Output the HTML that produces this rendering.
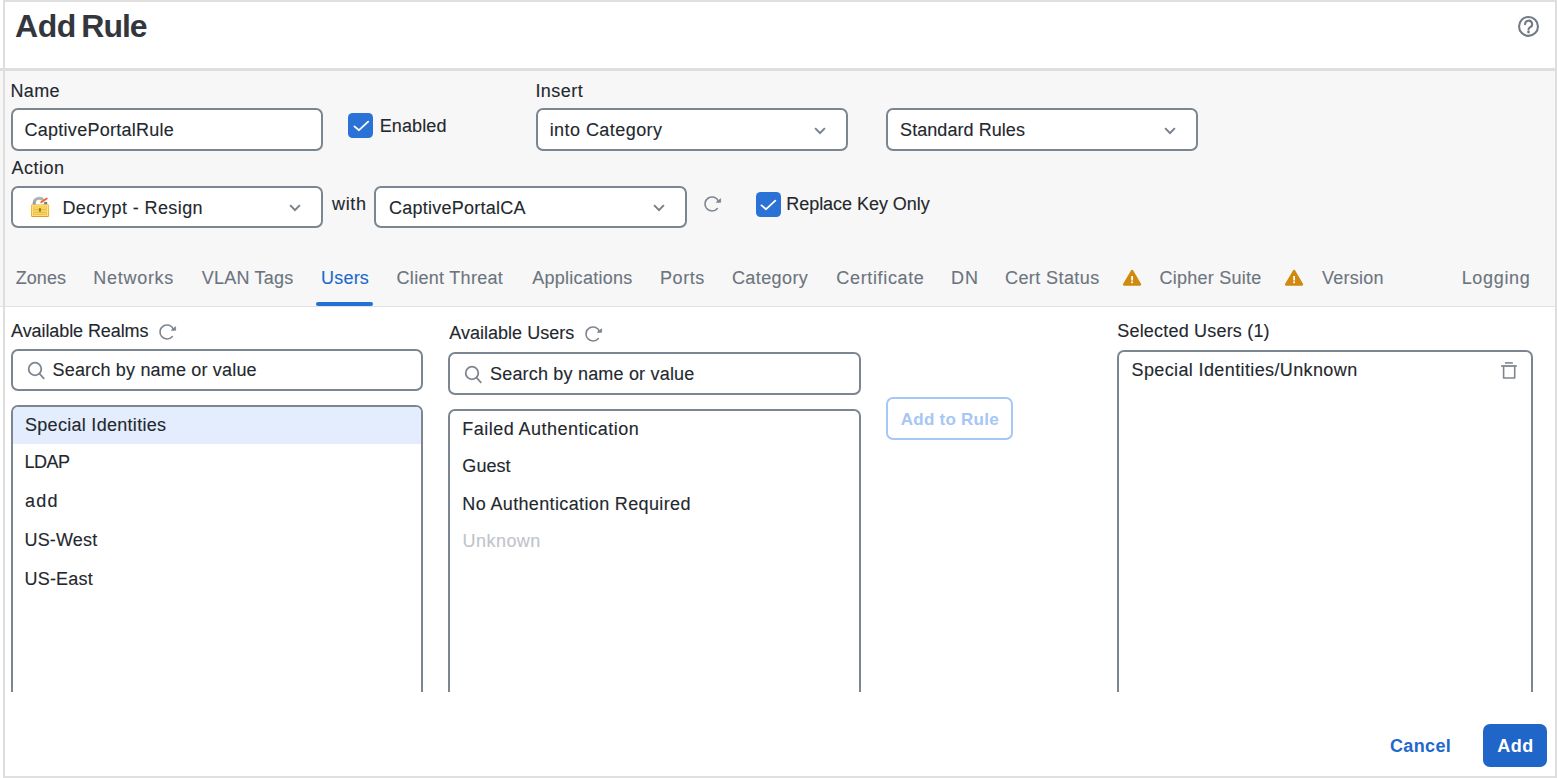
<!DOCTYPE html>
<html lang="en"><head><meta charset="utf-8"><title>Add Rule</title><style>
html,body{margin:0;padding:0}
body{width:1557px;height:778px;position:relative;overflow:hidden;background:#fff;font-family:"Liberation Sans", sans-serif;font-size:18px;color:#23282e}
header,section,nav,main,footer{display:block;margin:0;padding:0}
.a{position:absolute}
.t{position:absolute;white-space:pre}
.bx{position:absolute;box-sizing:border-box;border:2px solid #7c8691;border-radius:7px;background:#fff}
</style></head><body>
<div class="frame">
<div class="a" style="left:0;top:71px;width:1557px;height:235px;background:#f7f7f7"></div>
<div class="a" style="left:0;top:68px;width:1557px;height:3px;background:#dedede"></div>
<div class="a" style="left:0;top:306px;width:1557px;height:1px;background:#e2e2e2"></div>
<div class="a" style="left:3px;top:0;width:1554px;height:2px;background:#e0e0e0"></div>
<div class="a" style="left:3px;top:776px;width:1554px;height:2px;background:#e0e0e0"></div>
<div class="a" style="left:3px;top:0;width:2px;height:778px;background:#dedede"></div>
<div class="a" style="left:1555px;top:0;width:2px;height:778px;background:#dedede"></div>
</div>
<header class="dialog-header">
<svg class="a" style="left:1516px;top:14px" width="26" height="26" viewBox="1516 14 26 26"><circle cx="1528.5" cy="26.4" r="9.45" fill="none" stroke="#727a84" stroke-width="2.1"/><path d="M1525.1 24.2 A3.5 3.5 0 1 1 1530.3 27.2 C1529.2 27.9 1528.5 28.4 1528.5 29.4" fill="none" stroke="#727a84" stroke-width="2.1" stroke-linecap="round"/><circle cx="1528.5" cy="32" r="1.4" fill="#727a84"/></svg>
<span class="t" style="left:15.00px;top:7.00px;line-height:38px;letter-spacing:-0.480px;font-size:32px;font-weight:700;color:#33373d">Add </span>
<span class="t" style="left:81.37px;top:7.00px;line-height:38px;letter-spacing:-1.060px;font-size:32px;font-weight:700;color:#33373d">Rule</span>
</header>
<section class="rule-form">
<div class="bx" style="left:11px;top:108px;width:312px;height:43px;"></div>
<div class="bx" style="left:536px;top:108px;width:312px;height:43px;"></div>
<div class="bx" style="left:886px;top:108px;width:312px;height:43px;"></div>
<div class="bx" style="left:11px;top:186px;width:312px;height:42px;"></div>
<div class="bx" style="left:374px;top:186px;width:313px;height:42px;"></div>
<svg class="a" style="left:285.4px;top:200px" width="20" height="16" viewBox="285.4 200 20 16"><path d="M290.52 205.12 L295.40 210.18 L300.28 205.12" fill="none" stroke="#77818b" stroke-width="2" stroke-linecap="butt" stroke-linejoin="miter"/></svg>
<svg class="a" style="left:649.4px;top:200px" width="20" height="16" viewBox="649.4 200 20 16"><path d="M654.52 205.12 L659.40 210.18 L664.28 205.12" fill="none" stroke="#77818b" stroke-width="2" stroke-linecap="butt" stroke-linejoin="miter"/></svg>
<svg class="a" style="left:810.4px;top:122.5px" width="20" height="16" viewBox="810.4 122.5 20 16"><path d="M815.52 127.62 L820.40 132.68 L825.28 127.62" fill="none" stroke="#77818b" stroke-width="2" stroke-linecap="butt" stroke-linejoin="miter"/></svg>
<svg class="a" style="left:1160.4px;top:122.5px" width="20" height="16" viewBox="1160.4 122.5 20 16"><path d="M1165.52 127.62 L1170.40 132.68 L1175.28 127.62" fill="none" stroke="#77818b" stroke-width="2" stroke-linecap="butt" stroke-linejoin="miter"/></svg>
<svg class="a" style="left:700.0px;top:192.4px" width="24" height="24" viewBox="700.0 192.4 24 24"><path d="M717.36 208.90 A7.0 7.0 0 1 1 718.49 201.78" fill="none" stroke="#7d8690" stroke-width="1.6" stroke-linecap="round"/><path d="M720.60 199.10 V202.70 H716.30 Z" fill="#7d8690" stroke="#7d8690" stroke-width="0.8" stroke-linejoin="round"/></svg>
<svg class="a" style="left:348px;top:113px" width="25" height="25" viewBox="0 0 25 25"><rect x="0" y="0" width="25" height="25" rx="4.6" fill="#2a72d6"/><path d="M6.40 13.35 L11.00 17.2 L20.20 8.7" fill="none" stroke="#fff" stroke-width="1.8" stroke-linecap="round" stroke-linejoin="round"/></svg>
<svg class="a" style="left:756px;top:192px" width="25" height="25" viewBox="0 0 25 25"><rect x="0" y="0" width="25" height="25" rx="4.6" fill="#2a72d6"/><path d="M5.50 13.35 L10.10 17.2 L19.30 8.7" fill="none" stroke="#fff" stroke-width="1.8" stroke-linecap="round" stroke-linejoin="round"/></svg>
<svg class="a" style="left:29px;top:194px" width="22" height="25" viewBox="29 194 22 25"><defs><linearGradient id="lg" x1="0" y1="0" x2="0" y2="1"><stop offset="0" stop-color="#f3c04a"/><stop offset="0.8" stop-color="#eeb032"/><stop offset="1" stop-color="#e6951a"/></linearGradient><linearGradient id="sg" x1="0" y1="0" x2="0" y2="1"><stop offset="0" stop-color="#b4b5b9"/><stop offset="1" stop-color="#8b8d94"/></linearGradient></defs><path d="M34.2 205.5 V202.6 A4.9 4.9 0 0 1 39.1 198.3 C40.9 198.3 42.3 198.9 43.2 200.1" fill="none" stroke="url(#sg)" stroke-width="3.1" stroke-linecap="butt"/><rect x="44.1" y="201.9" width="3.1" height="3.2" fill="#7e7f90"/><path d="M41.2 202.3 L46.8 198.5" stroke="#f4622a" stroke-width="1.8" stroke-linecap="round"/><rect x="31" y="204.2" width="18.1" height="12.7" rx="1.1" fill="url(#lg)"/><rect x="32.6" y="205.8" width="14.9" height="9.6" fill="none" stroke="#fbe9a0" stroke-width="1.1" opacity="0.9"/><rect x="33.6" y="206.8" width="12.9" height="7.6" fill="#f7d55c"/><rect x="34.4" y="209" width="11.3" height="0.9" fill="#e9b640"/><rect x="34.4" y="211.9" width="11.3" height="0.9" fill="#e9b640"/><rect x="38.9" y="208" width="2.1" height="3.8" rx="0.9" fill="#9a7428"/></svg>
<span class="t" style="left:10.46px;top:80.00px;line-height:22px;letter-spacing:0.372px;-webkit-text-stroke:0.12px">Name</span>
<span class="t" style="left:24.56px;top:119.00px;line-height:22px;letter-spacing:0.260px;-webkit-text-stroke:0.12px">CaptivePortalRule</span>
<span class="t" style="left:379.64px;top:115.00px;line-height:22px;letter-spacing:0.130px;-webkit-text-stroke:0.12px">Enabled</span>
<span class="t" style="left:535.39px;top:80.00px;line-height:22px;letter-spacing:0.476px;-webkit-text-stroke:0.12px">Insert</span>
<span class="t" style="left:549.64px;top:119.00px;line-height:22px;letter-spacing:0.447px;-webkit-text-stroke:0.12px">into Category</span>
<span class="t" style="left:900.07px;top:119.00px;line-height:22px;letter-spacing:0.059px;-webkit-text-stroke:0.12px">Standard Rules</span>
<span class="t" style="left:11.52px;top:157.00px;line-height:22px;letter-spacing:0.479px;-webkit-text-stroke:0.12px">Action</span>
<span class="t" style="left:62.46px;top:197.00px;line-height:22px;letter-spacing:0.404px;-webkit-text-stroke:0.12px">Decrypt - Resign</span>
<span class="t" style="left:332.06px;top:193.00px;line-height:22px;letter-spacing:0.651px;-webkit-text-stroke:0.12px">with</span>
<span class="t" style="left:389.07px;top:197.00px;line-height:22px;letter-spacing:0.238px;-webkit-text-stroke:0.12px">CaptivePortalCA</span>
<span class="t" style="left:786.27px;top:193.00px;line-height:22px;letter-spacing:-0.042px;-webkit-text-stroke:0.12px">Replace Key Only</span>
</section>
<nav class="rule-tabs">
<div class="a" style="left:316px;top:302px;width:57px;height:4px;border-radius:2px;background:#2370d6"></div>
<svg class="a" style="left:1120.9px;top:267.8px" width="22.199999999999818" height="19.69999999999999" viewBox="1120.9 267.8 22.199999999999818 19.69999999999999"><path d="M1132.0 271.0 L1139.8 284.2 L1124.2 284.2 Z" fill="#cf8a0f" stroke="#cf8a0f" stroke-width="2.6" stroke-linejoin="round"/><rect x="1131.1" y="275.8" width="1.8" height="4.5" fill="#fff"/><rect x="1131.1" y="281.2" width="1.8" height="1.8" fill="#fff"/></svg>
<svg class="a" style="left:1282.9px;top:267.8px" width="22.199999999999818" height="19.69999999999999" viewBox="1282.9 267.8 22.199999999999818 19.69999999999999"><path d="M1294.0 271.0 L1301.8 284.2 L1286.2 284.2 Z" fill="#cf8a0f" stroke="#cf8a0f" stroke-width="2.6" stroke-linejoin="round"/><rect x="1293.1" y="275.8" width="1.8" height="4.5" fill="#fff"/><rect x="1293.1" y="281.2" width="1.8" height="1.8" fill="#fff"/></svg>
<span class="t" style="left:15.65px;top:267.00px;line-height:22px;letter-spacing:0.109px;color:#6c747e;-webkit-text-stroke:0.12px">Zones</span>
<span class="t" style="left:93.32px;top:267.00px;line-height:22px;letter-spacing:0.715px;color:#6c747e;-webkit-text-stroke:0.12px">Networks</span>
<span class="t" style="left:201.69px;top:267.00px;line-height:22px;letter-spacing:0.229px;color:#6c747e;-webkit-text-stroke:0.12px">VLAN Tags</span>
<span class="t" style="left:321.02px;top:267.00px;line-height:22px;letter-spacing:0.201px;color:#1d69cc;-webkit-text-stroke:0.12px">Users</span>
<span class="t" style="left:396.57px;top:267.00px;line-height:22px;letter-spacing:0.291px;color:#6c747e;-webkit-text-stroke:0.12px">Client Threat</span>
<span class="t" style="left:532.20px;top:267.00px;line-height:22px;letter-spacing:0.280px;color:#6c747e;-webkit-text-stroke:0.12px">Applications</span>
<span class="t" style="left:660.04px;top:267.00px;line-height:22px;letter-spacing:0.546px;color:#6c747e;-webkit-text-stroke:0.12px">Ports</span>
<span class="t" style="left:731.96px;top:267.00px;line-height:22px;letter-spacing:0.405px;color:#6c747e;-webkit-text-stroke:0.12px">Category</span>
<span class="t" style="left:836.33px;top:267.00px;line-height:22px;letter-spacing:0.652px;color:#6c747e;-webkit-text-stroke:0.12px">Certificate</span>
<span class="t" style="left:951.04px;top:267.00px;line-height:22px;letter-spacing:0.886px;color:#6c747e;-webkit-text-stroke:0.12px">DN</span>
<span class="t" style="left:1004.96px;top:267.00px;line-height:22px;letter-spacing:0.424px;color:#6c747e;-webkit-text-stroke:0.12px">Cert Status</span>
<span class="t" style="left:1159.40px;top:267.00px;line-height:22px;letter-spacing:0.251px;color:#6c747e;-webkit-text-stroke:0.12px">Cipher Suite</span>
<span class="t" style="left:1322.03px;top:267.00px;line-height:22px;letter-spacing:0.249px;color:#6c747e;-webkit-text-stroke:0.12px">Version</span>
<span class="t" style="left:1461.64px;top:267.00px;line-height:22px;letter-spacing:0.681px;color:#6c747e;-webkit-text-stroke:0.12px">Logging</span>
</nav>
<main class="users-tab">
<div class="bx" style="left:11px;top:349px;width:412px;height:42px;"></div>
<div class="bx" style="left:448px;top:352px;width:413px;height:43px;"></div>
<div class="a" style="left:0;top:400px;width:1557px;height:292px;overflow:hidden"><div class="bx" style="left:11px;top:5px;width:412px;height:335px;"></div><div class="a" style="left:13px;top:7px;width:408px;height:37px;background:#e3edfd;border-radius:5px 5px 0 0"></div><div class="bx" style="left:448px;top:9px;width:413px;height:331px;"></div><div class="bx" style="left:1117px;top:-50px;width:416px;height:390px;"></div></div>
<div class="a" style="left:1117px;top:350px;width:416px;height:60px;overflow:hidden"><div class="bx" style="left:0px;top:0px;width:416px;height:200px;"></div></div>
<div class="bx" style="left:886px;top:397px;width:127px;height:43px;border-color:#a6c7f8;background:#fff"></div>
<svg class="a" style="left:154.9px;top:319.9px" width="24" height="24" viewBox="154.9 319.9 24 24"><path d="M172.26 336.40 A7.0 7.0 0 1 1 173.39 329.28" fill="none" stroke="#7d8690" stroke-width="1.6" stroke-linecap="round"/><path d="M175.50 326.60 V330.20 H171.20 Z" fill="#7d8690" stroke="#7d8690" stroke-width="0.8" stroke-linejoin="round"/></svg>
<svg class="a" style="left:580.8px;top:321.9px" width="24" height="24" viewBox="580.8 321.9 24 24"><path d="M598.16 338.40 A7.0 7.0 0 1 1 599.29 331.28" fill="none" stroke="#7d8690" stroke-width="1.6" stroke-linecap="round"/><path d="M601.40 328.60 V332.20 H597.10 Z" fill="#7d8690" stroke="#7d8690" stroke-width="0.8" stroke-linejoin="round"/></svg>
<svg class="a" style="left:22.700000000000003px;top:356.5px" width="28" height="28" viewBox="22.700000000000003 356.5 28 28"><circle cx="34.7" cy="368.5" r="6.3" fill="none" stroke="#7d8690" stroke-width="1.8"/><path d="M39.400000000000006 373.4 L43.5 377.8" stroke="#7d8690" stroke-width="1.7" stroke-linecap="round"/></svg>
<svg class="a" style="left:459.9px;top:360.9px" width="28" height="28" viewBox="459.9 360.9 28 28"><circle cx="471.9" cy="372.9" r="6.3" fill="none" stroke="#7d8690" stroke-width="1.8"/><path d="M476.59999999999997 377.79999999999995 L480.7 382.2" stroke="#7d8690" stroke-width="1.7" stroke-linecap="round"/></svg>
<svg class="a" style="left:1499px;top:360px" width="20" height="21" viewBox="1499 360 20 21"><path d="M1505 362.9 H1512.8" stroke="#7d8690" stroke-width="1.6"/><path d="M1501.2 366 H1516.8" stroke="#7d8690" stroke-width="1.8"/><path d="M1503.6 366.5 V378 H1514.7 V366.5" fill="none" stroke="#7d8690" stroke-width="1.6" stroke-linejoin="round"/></svg>
<span class="t" style="left:11.07px;top:320.00px;line-height:22px;letter-spacing:-0.090px;-webkit-text-stroke:0.12px">Available Realms</span>
<span class="t" style="left:52.56px;top:359.00px;line-height:22px;letter-spacing:0.179px;-webkit-text-stroke:0.12px">Search by name or value</span>
<span class="t" style="left:449.20px;top:322.00px;line-height:22px;letter-spacing:0.025px;-webkit-text-stroke:0.12px">Available Users</span>
<span class="t" style="left:489.99px;top:363.00px;line-height:22px;letter-spacing:0.191px;-webkit-text-stroke:0.12px">Search by name or value</span>
<span class="t" style="left:1117.28px;top:320.00px;line-height:22px;letter-spacing:0.193px;-webkit-text-stroke:0.12px">Selected Users (1)</span>
<span class="t" style="left:1131.50px;top:359.00px;line-height:22px;letter-spacing:0.381px;-webkit-text-stroke:0.12px">Special Identities/Unknown</span>
<span class="t" style="left:900.81px;top:409.00px;line-height:21px;letter-spacing:0.250px;font-size:17px;font-weight:700;color:#a6c6f6">Add to Rule</span>
<span class="t" style="left:24.99px;top:414.00px;line-height:22px;letter-spacing:0.292px;-webkit-text-stroke:0.12px">Special Identities</span>
<span class="t" style="left:24.46px;top:451.00px;line-height:22px;letter-spacing:-0.466px;-webkit-text-stroke:0.12px">LDAP</span>
<span class="t" style="left:25.12px;top:490.00px;line-height:22px;letter-spacing:1.142px;-webkit-text-stroke:0.12px">add</span>
<span class="t" style="left:24.49px;top:529.00px;line-height:22px;letter-spacing:0.163px;-webkit-text-stroke:0.12px">US-West</span>
<span class="t" style="left:24.49px;top:568.00px;line-height:22px;letter-spacing:0.213px;-webkit-text-stroke:0.12px">US-East</span>
<span class="t" style="left:462.32px;top:418.00px;line-height:22px;letter-spacing:0.464px;-webkit-text-stroke:0.12px">Failed Authentication</span>
<span class="t" style="left:462.35px;top:455.00px;line-height:22px;letter-spacing:0.034px;-webkit-text-stroke:0.12px">Guest</span>
<span class="t" style="left:462.32px;top:493.00px;line-height:22px;letter-spacing:0.358px;-webkit-text-stroke:0.12px">No Authentication Required</span>
<span class="t" style="left:462.44px;top:530.00px;line-height:22px;letter-spacing:0.480px;color:#bfc4cb;-webkit-text-stroke:0.12px">Unknown</span>
</main>
<footer class="dialog-footer">
<div class="a" style="left:1483px;top:724px;width:64px;height:43px;border-radius:7px;background:#1f66c8"></div>
<span class="t" style="left:1390.01px;top:735.00px;line-height:22px;letter-spacing:0.341px;font-size:18px;font-weight:700;color:#1d69cc">Cancel</span>
<span class="t" style="left:1497.14px;top:735.00px;line-height:22px;letter-spacing:0.541px;font-size:18px;font-weight:700;color:#ffffff">Add</span>
</footer>
</body></html>
